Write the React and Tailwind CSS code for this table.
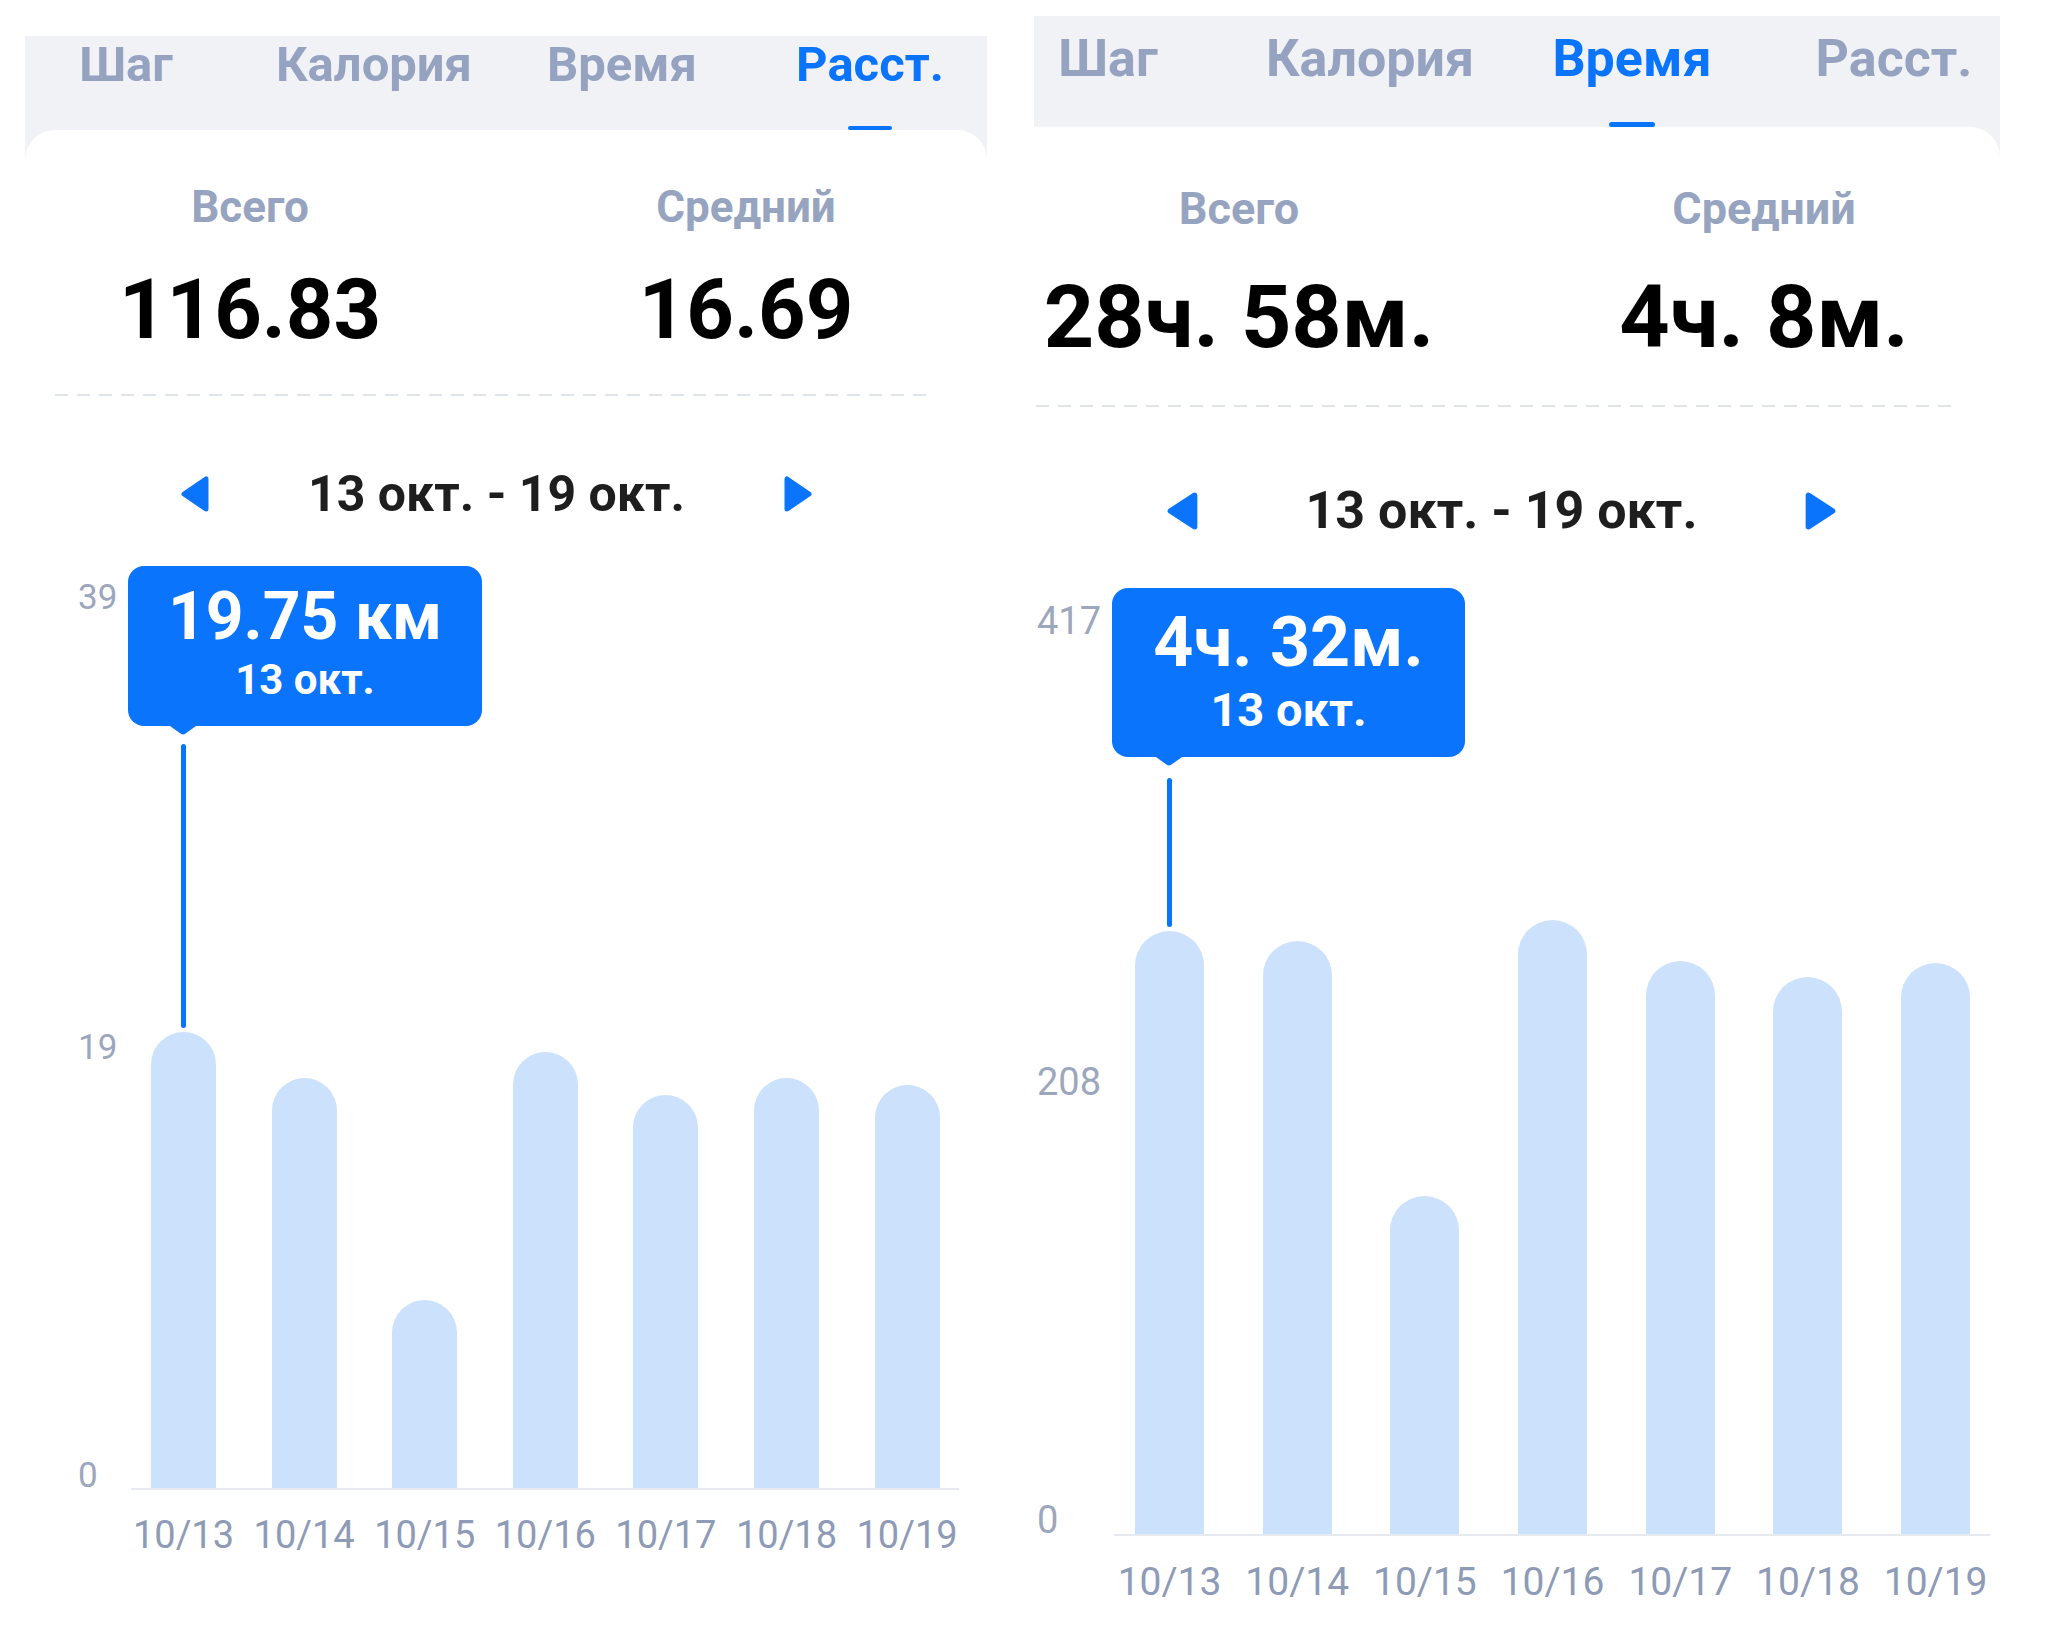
import React from "react";

const BLUE = "#0b74fc";

function TriLeft({ cls }) {
  return (
    <svg viewBox="0 0 30 36" preserveAspectRatio="none" className={cls}>
      <polygon points="26,3 26,33 4,18" fill={BLUE} stroke={BLUE} strokeWidth="5" strokeLinejoin="round" />
    </svg>
  );
}
function TriRight({ cls }) {
  return (
    <svg viewBox="0 0 30 36" preserveAspectRatio="none" className={cls}>
      <polygon points="4,3 4,33 26,18" fill={BLUE} stroke={BLUE} strokeWidth="5" strokeLinejoin="round" />
    </svg>
  );
}

const TABS = ["Шаг", "Калория", "Время", "Расст."];
const DATES = ["10/13", "10/14", "10/15", "10/16", "10/17", "10/18", "10/19"];

function Panel({ c, active, total, avg, bars, yLabels, tipMain }) {
  return (
    <div className={"flex flex-col bg-[#f0f2f6] font-['Roboto',sans-serif] shrink-0 " + c.wrap}>
      <div className={"flex " + c.tabsRow}>
        {TABS.map((t, i) => (
          <div key={t} className="w-[200px] shrink-0 flex flex-col items-center">
            <div
              className={
                "leading-none font-bold whitespace-nowrap flex justify-center w-full " +
                c.tabText +
                (i === active ? " text-[#0b74fc]" : " text-[#95a3c1]")
              }
            >
              <span>{t}</span>
            </div>
            <div className={"rounded-full " + c.underline + (i === active ? " bg-[#0b74fc]" : " bg-transparent")} />
          </div>
        ))}
      </div>
      <div className={"bg-white flex flex-col flex-1 " + c.card}>
        <div className={"flex " + c.stats}>
          <div className={"w-[400px] shrink-0 flex flex-col items-center " + c.col1}>
            <div className={"leading-none font-bold text-[#97a4c0] " + c.label}>Всего</div>
            <div className={"leading-none font-bold text-black whitespace-nowrap " + c.value}>{total}</div>
          </div>
          <div className={"w-[400px] shrink-0 flex flex-col items-center " + c.col2}>
            <div className={"leading-none font-bold text-[#97a4c0] " + c.label}>Средний</div>
            <div className={"leading-none font-bold text-black whitespace-nowrap " + c.value}>{avg}</div>
          </div>
        </div>
        <div className={"h-[2px] bg-[repeating-linear-gradient(90deg,#dfe3ea_0px,#dfe3ea_13px,transparent_13px,transparent_22px)] " + c.dash} />
        <div className={"flex items-center " + c.nav}>
          <TriLeft cls={"shrink-0 " + c.tri} />
          <div className={"leading-none font-bold text-[#1e1e1e] text-center whitespace-nowrap shrink-0 " + c.navText}>
            13 окт. - 19 окт.
          </div>
          <TriRight cls={"shrink-0 " + c.tri} />
        </div>
        <div className={"relative flex items-end " + c.plot}>
          {yLabels.map((y) => (
            <div
              key={y.t}
              className={"absolute leading-none text-[#9ca7bd] " + c.yText}
              style={{ top: y.top, left: c.yLeft }}
            >
              {y.t}
            </div>
          ))}
          {bars.map((h, i) => (
            <div key={i} className={"rounded-t-full bg-[#cce2fc] shrink-0 " + c.barW} style={{ height: h }} />
          ))}
          <div className={"absolute rounded-full bg-[#0b74fc] w-[5px] " + c.line} />
          <div className={"absolute rounded-[16px] bg-[#0b74fc] flex flex-col items-center " + c.tip}>
            <div className={"leading-none font-bold text-white whitespace-nowrap " + c.tipMain}>{tipMain}</div>
            <div className={"leading-none font-bold text-white whitespace-nowrap " + c.tipSub}>13 окт.</div>
            <svg viewBox="0 0 26 9" className={"absolute top-full w-[26px] h-[9px] " + c.ptr}>
              <path d="M0 0 L26 0 L15.5 7.6 Q13 9.4 10.5 7.6 Z" fill={BLUE} />
            </svg>
          </div>
        </div>
        <div className={"h-[2px] bg-[#e6e9ef] " + c.base} />
        <div className={"flex " + c.xRow}>
          {DATES.map((d) => (
            <div key={d} className={"flex justify-center shrink-0 " + c.barW}>
              <span className={"leading-none whitespace-nowrap text-[#8e9bb7] " + c.xText}>{d}</span>
            </div>
          ))}
        </div>
      </div>
    </div>
  );
}

const leftC = {
  wrap: "ml-[25px] mt-[36px] w-[962px] h-[1598px]",
  tabsRow: "pt-[4px] ml-[1px] gap-[48px]",
  tabText: "text-[49px]",
  underline: "mt-[37px] h-[4px] w-[44px]",
  card: "rounded-t-[30px]",
  stats: "pt-[55px]",
  col1: "ml-[25px]",
  col2: "ml-[96px]",
  label: "text-[44px]",
  value: "text-[83px] mt-[39px]",
  dash: "mt-[43px] ml-[30px] w-[875px]",
  nav: "mt-[72.5px] ml-[155px]",
  tri: "w-[30px] h-[36px]",
  navText: "text-[50px] w-[573px]",
  plot: "mt-[36.5px] h-[933px] pl-[126px] gap-[55.6px]",
  yText: "text-[35px]",
  yLeft: 53,
  barW: "w-[65px]",
  line: "left-[155.5px] top-[189px] h-[284px]",
  tip: "left-[103px] top-[11px] w-[354px] h-[160px] pt-[18px]",
  tipMain: "text-[66px]",
  tipSub: "text-[42px] mt-[9px]",
  ptr: "left-[42px]",
  base: "ml-[106px] w-[828px]",
  xRow: "pl-[126px] gap-[55.6px] mt-[26px]",
  xText: "text-[38px]",
};

const rightC = {
  wrap: "ml-[47px] mt-[16px] w-[966px] h-[1618px]",
  tabsRow: "pt-[16.5px] -ml-[26px] gap-[62px]",
  tabText: "text-[52px]",
  underline: "mt-[37.5px] h-[5px] w-[46px]",
  card: "rounded-tr-[30px]",
  stats: "pt-[59px]",
  col1: "ml-[5px]",
  col2: "ml-[125px]",
  label: "text-[45px]",
  value: "text-[88px] mt-[41.5px]",
  dash: "mt-[44.5px] ml-[2px] w-[922px]",
  nav: "mt-[78px] ml-[132px]",
  tri: "w-[33px] h-[38px]",
  navText: "text-[52px] w-[605px]",
  plot: "mt-[36px] h-[961px] pl-[101px] gap-[58.7px]",
  yText: "text-[38px]",
  yLeft: 3,
  barW: "w-[69px]",
  line: "left-[132.5px] top-[205px] h-[149px]",
  tip: "left-[78px] top-[15px] w-[353px] h-[169px] pt-[19px]",
  tipMain: "text-[70px]",
  tipSub: "text-[47px] mt-[9px]",
  ptr: "left-[44px]",
  base: "ml-[80px] w-[876px]",
  xRow: "pl-[101px] gap-[58.7px] mt-[27px]",
  xText: "text-[39px]",
};

export default function App() {
  return (
    <div className="w-[2048px] h-[1634px] bg-white flex items-start overflow-hidden">
      <Panel
        c={leftC}
        active={3}
        total="116.83"
        avg="16.69"
        bars={[456, 410, 188, 436, 393, 410, 403]}
        yLabels={[
          { t: "39", top: 25 },
          { t: "19", top: 475 },
          { t: "0", top: 903 },
        ]}
        tipMain="19.75 км"
      />
      <Panel
        c={rightC}
        active={2}
        total="28ч. 58м."
        avg="4ч. 8м."
        bars={[603, 593, 338, 614, 573, 557, 571]}
        yLabels={[
          { t: "417", top: 29 },
          { t: "208", top: 490 },
          { t: "0", top: 928 },
        ]}
        tipMain="4ч. 32м."
      />
    </div>
  );
}
